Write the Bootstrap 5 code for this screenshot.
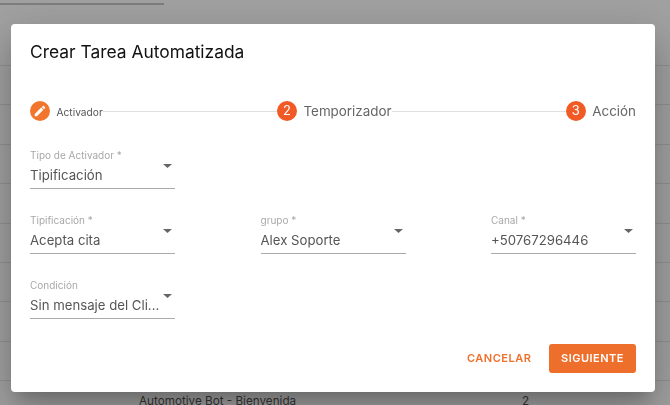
<!DOCTYPE html>
<html lang="es">
<head>
  <meta charset="UTF-8">
  <meta name="viewport" content="width=device-width, initial-scale=1">
  <title>Crear Tarea Automatizada</title>
  <link href="https://cdn.jsdelivr.net/npm/bootstrap@5.3.2/dist/css/bootstrap.min.css" rel="stylesheet">
  <style>
    html, body { height: 100%; overflow: hidden; }
    body { font-family: "Inter", "Liberation Sans", sans-serif; background: #fff; color: #333; }

    /* page behind the dialog */
    .back-bar { width: 164px; height: 2px; margin-top: 3px; background: #c8c8c8; }
    .back-head { height: 61px; border-bottom: 1px solid #e6e6e6; }
    .back-row { height: 39.4px; border-bottom: 1px solid #e6e6e6; }
    .back-last { font-size: 11.7px; padding-left: 139px; padding-top: 12px; color: #555; border: 0; }
    .back-last span:last-child { margin-left: 226px; }

    .shade { background: rgba(0, 0, 0, .37); opacity: 1; }
    .task-modal { display: block; z-index: 1055; }
    .task-dialog { width: 644px; max-width: none; margin: 24px 0 0 11px; }
    .task-content { height: 368px; border: 0; border-radius: 4px; padding: 0 19px;
      box-shadow: 0 11px 15px -7px rgba(0,0,0,.2), 0 24px 38px 3px rgba(0,0,0,.14), 0 9px 46px 8px rgba(0,0,0,.12); }
    .task-title { font-size: 17.4px; font-weight: 400; line-height: 24px; color: #111; margin: 16px 0 0; }

    .stepper { margin-top: 37px; height: 20px; }
    .step-dot { width: 20px; height: 20px; flex: none; border-radius: 50%; background: #f15a24; color: #fff; font-size: 13px; }
    .step-dot.done { background: #f1752c; }
    .step-name { font-size: 13.4px; color: #666; margin-left: 6.5px; white-space: nowrap; }
    .step-name.first { font-size: 10.2px; line-height: 14px; padding-top: 1px; color: #555; }
    .step-line { flex: 1 1 auto; height: 1px; background: #e0e0e0; }

    .field { width: 145px; height: 42px; position: relative; border-bottom: 1.5px solid #aaa; }
    .field-label { font-size: 10px; line-height: 13px; color: #a8a8a8; padding-top: 2px; }
    .field-value { font-size: 13.2px; line-height: 20px; color: #555; margin-top: 3px; }
    .field svg { position: absolute; right: 3px; top: 17px; }
    .first-row { margin-top: 26px; }
    .next-row { margin-top: 23px; }

    .task-actions { margin-top: 25px; }
    .btn-plain, .btn-next { font-size: 11px; font-weight: 600; letter-spacing: .5px; border-radius: 3px; height: 29px; padding: 0; }
    .btn-plain { color: #ef712c; border: 0; width: 64px; margin-right: 18px; }
    .btn-plain:hover { color: #ef712c; }
    .btn-next { width: 87px; background: #ee6f2b; color: #fff; border: 0; }
    .btn-next:hover { background: #ee6f2b; color: #fff; }
  </style>
</head>
<body>
  <div class="back-bar"></div>
  <div class="back-head"></div>
  <div class="back-row"></div>
  <div class="back-row"></div>
  <div class="back-row"></div>
  <div class="back-row"></div>
  <div class="back-row"></div>
  <div class="back-row"></div>
  <div class="back-row"></div>
  <div class="back-row"></div>
  <div class="back-row back-last"><span>Automotive Bot - Bienvenida</span><span>2</span></div>

  <div class="modal-backdrop shade"></div>
  <div class="modal task-modal">
    <div class="modal-dialog task-dialog">
      <div class="modal-content task-content">
        <h5 class="task-title">Crear Tarea Automatizada</h5>

        <div class="stepper d-flex align-items-center">
          <div class="step-dot done d-flex align-items-center justify-content-center">
            <svg width="14" height="14" viewBox="0 0 24 24" fill="#fff"><path d="M3 17.25V21h3.75L17.81 9.94l-3.75-3.75L3 17.25zM20.71 7.04c.39-.39.39-1.02 0-1.41l-2.34-2.34c-.39-.39-1.02-.39-1.41 0l-1.83 1.83 3.75 3.75 1.83-1.83z"/></svg>
          </div>
          <span class="step-name first">Activador</span>
          <div class="step-line"></div>
          <div class="step-dot d-flex align-items-center justify-content-center">2</div>
          <span class="step-name">Temporizador</span>
          <div class="step-line"></div>
          <div class="step-dot d-flex align-items-center justify-content-center">3</div>
          <span class="step-name">Acción</span>
        </div>

        <div class="d-flex first-row">
          <div class="field">
            <div class="field-label">Tipo de Activador *</div>
            <div class="field-value">Tipificación</div>
            <svg width="9" height="4" viewBox="0 0 9 4" fill="#666"><path d="M0 0h9L4.5 4z"/></svg>
          </div>
        </div>

        <div class="d-flex justify-content-between next-row">
          <div class="field">
            <div class="field-label">Tipificación *</div>
            <div class="field-value">Acepta cita</div>
            <svg width="9" height="4" viewBox="0 0 9 4" fill="#666"><path d="M0 0h9L4.5 4z"/></svg>
          </div>
          <div class="field">
            <div class="field-label">grupo *</div>
            <div class="field-value">Alex Soporte</div>
            <svg width="9" height="4" viewBox="0 0 9 4" fill="#666"><path d="M0 0h9L4.5 4z"/></svg>
          </div>
          <div class="field">
            <div class="field-label">Canal *</div>
            <div class="field-value">+50767296446</div>
            <svg width="9" height="4" viewBox="0 0 9 4" fill="#666"><path d="M0 0h9L4.5 4z"/></svg>
          </div>
        </div>

        <div class="d-flex next-row">
          <div class="field">
            <div class="field-label">Condición</div>
            <div class="field-value">Sin mensaje del Cli...</div>
            <svg width="9" height="4" viewBox="0 0 9 4" fill="#666"><path d="M0 0h9L4.5 4z"/></svg>
          </div>
        </div>

        <div class="task-actions d-flex justify-content-end align-items-center">
          <button type="button" class="btn btn-plain">CANCELAR</button>
          <button type="button" class="btn btn-next">SIGUIENTE</button>
        </div>
      </div>
    </div>
  </div>

  <script src="https://cdn.jsdelivr.net/npm/bootstrap@5.3.2/dist/js/bootstrap.bundle.min.js"></script>
</body>
</html>
